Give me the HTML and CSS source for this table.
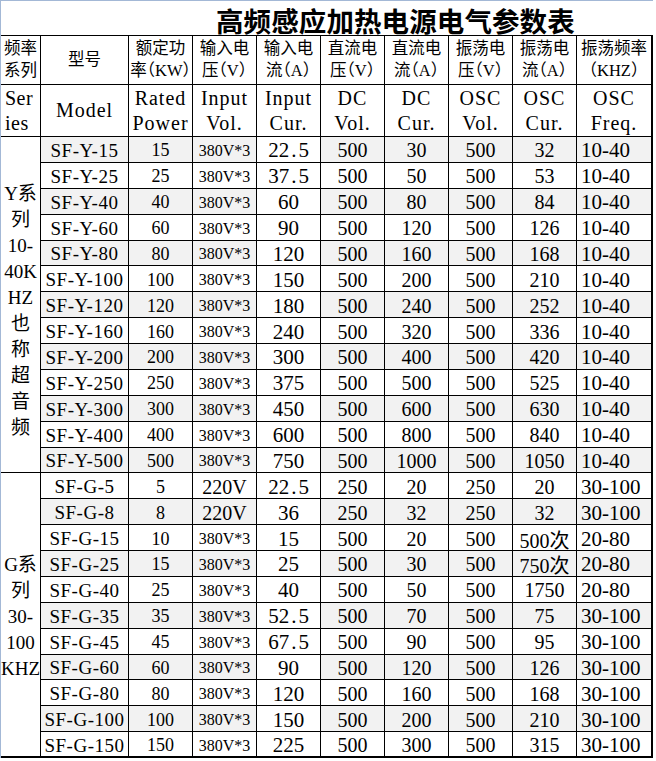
FILE: index.html
```html
<!DOCTYPE html>
<html lang="zh-CN">
<head>
<meta charset="utf-8">
<title>高频感应加热电源电气参数表</title>
<link rel="stylesheet" href="styles.css">
</head>
<body>
<div class="sheet">
  <div class="title">高频感应加热电源电气参数表</div>

  <div class="hrow1">
    <div>频率<br>系列</div>
    <div>型号</div>
    <div>额定功<br>率（KW）</div>
    <div>输入电<br>压（V）</div>
    <div>输入电<br>流（A）</div>
    <div>直流电<br>压（V）</div>
    <div>直流电<br>流（A）</div>
    <div>振荡电<br>压（V）</div>
    <div>振荡电<br>流（A）</div>
    <div>振荡频率<br>（KHZ）</div>
  </div>

  <div class="hrow2">
    <div class="ser">Ser<br>ies</div>
    <div>Model</div>
    <div>Rated<br>Power</div>
    <div>Input<br>Vol.</div>
    <div>Input<br>Cur.</div>
    <div>DC<br>Vol.</div>
    <div>DC<br>Cur.</div>
    <div>OSC<br>Vol.</div>
    <div>OSC<br>Cur.</div>
    <div>OSC<br>Freq.</div>
  </div>

  <div class="series y">Y系<br>列<br>10-<br>40K<br>HZ<br>也<br>称<br>超<br>音<br>频</div>
  <div class="row alt"><div>SF-Y-15</div><div>15</div><div>380V*3</div><div>22<span class="pt">.</span>5</div><div>500</div><div>30</div><div>500</div><div>32</div><div>10-40</div></div>
  <div class="row"><div>SF-Y-25</div><div>25</div><div>380V*3</div><div>37<span class="pt">.</span>5</div><div>500</div><div>50</div><div>500</div><div>53</div><div>10-40</div></div>
  <div class="row alt"><div>SF-Y-40</div><div>40</div><div>380V*3</div><div>60</div><div>500</div><div>80</div><div>500</div><div>84</div><div>10-40</div></div>
  <div class="row"><div>SF-Y-60</div><div>60</div><div>380V*3</div><div>90</div><div>500</div><div>120</div><div>500</div><div>126</div><div>10-40</div></div>
  <div class="row alt"><div>SF-Y-80</div><div>80</div><div>380V*3</div><div>120</div><div>500</div><div>160</div><div>500</div><div>168</div><div>10-40</div></div>
  <div class="row"><div>SF-Y-100</div><div>100</div><div>380V*3</div><div>150</div><div>500</div><div>200</div><div>500</div><div>210</div><div>10-40</div></div>
  <div class="row alt"><div>SF-Y-120</div><div>120</div><div>380V*3</div><div>180</div><div>500</div><div>240</div><div>500</div><div>252</div><div>10-40</div></div>
  <div class="row"><div>SF-Y-160</div><div>160</div><div>380V*3</div><div>240</div><div>500</div><div>320</div><div>500</div><div>336</div><div>10-40</div></div>
  <div class="row alt"><div>SF-Y-200</div><div>200</div><div>380V*3</div><div>300</div><div>500</div><div>400</div><div>500</div><div>420</div><div>10-40</div></div>
  <div class="row"><div>SF-Y-250</div><div>250</div><div>380V*3</div><div>375</div><div>500</div><div>500</div><div>500</div><div>525</div><div>10-40</div></div>
  <div class="row alt"><div>SF-Y-300</div><div>300</div><div>380V*3</div><div>450</div><div>500</div><div>600</div><div>500</div><div>630</div><div>10-40</div></div>
  <div class="row"><div>SF-Y-400</div><div>400</div><div>380V*3</div><div>600</div><div>500</div><div>800</div><div>500</div><div>840</div><div>10-40</div></div>
  <div class="row alt"><div>SF-Y-500</div><div>500</div><div>380V*3</div><div>750</div><div>500</div><div>1000</div><div>500</div><div>1050</div><div>10-40</div></div>

  <div class="series g">G系<br>列<br>30-<br>100<br>KHZ</div>
  <div class="row"><div>SF-G-5</div><div>5</div><div class="big">220V</div><div>22<span class="pt">.</span>5</div><div>250</div><div>20</div><div>250</div><div>20</div><div>30-100</div></div>
  <div class="row alt"><div>SF-G-8</div><div>8</div><div class="big">220V</div><div>36</div><div>250</div><div>32</div><div>250</div><div>32</div><div>30-100</div></div>
  <div class="row"><div>SF-G-15</div><div>10</div><div>380V*3</div><div>15</div><div>500</div><div>20</div><div>500</div><div>500次</div><div>20-80</div></div>
  <div class="row alt"><div>SF-G-25</div><div>15</div><div>380V*3</div><div>25</div><div>500</div><div>30</div><div>500</div><div>750次</div><div>20-80</div></div>
  <div class="row"><div>SF-G-40</div><div>25</div><div>380V*3</div><div>40</div><div>500</div><div>50</div><div>500</div><div>1750</div><div>20-80</div></div>
  <div class="row alt"><div>SF-G-35</div><div>35</div><div>380V*3</div><div>52<span class="pt">.</span>5</div><div>500</div><div>70</div><div>500</div><div>75</div><div>30-100</div></div>
  <div class="row"><div>SF-G-45</div><div>45</div><div>380V*3</div><div>67<span class="pt">.</span>5</div><div>500</div><div>90</div><div>500</div><div>95</div><div>30-100</div></div>
  <div class="row alt"><div>SF-G-60</div><div>60</div><div>380V*3</div><div>90</div><div>500</div><div>120</div><div>500</div><div>126</div><div>30-100</div></div>
  <div class="row"><div>SF-G-80</div><div>80</div><div>380V*3</div><div>120</div><div>500</div><div>160</div><div>500</div><div>168</div><div>30-100</div></div>
  <div class="row alt"><div>SF-G-100</div><div>100</div><div>380V*3</div><div>150</div><div>500</div><div>200</div><div>500</div><div>210</div><div>30-100</div></div>
  <div class="row last"><div>SF-G-150</div><div>150</div><div>380V*3</div><div>225</div><div>500</div><div>300</div><div>500</div><div>315</div><div>30-100</div></div>
</div>
</body>
</html>
```

FILE: styles.css
```css
html, body {
  margin: 0;
  padding: 0;
  background: #ffffff;
}

.sheet {
  display: grid;
  width: 652px;
  grid-template-columns: 40px 88px repeat(7, 64px) 76px;
  grid-template-rows: 35px 49px 52px repeat(24, 25.875px);
  border-top: 1px solid #a3b8d6;
  border-left: 1px solid #a3b8d6;
  font-family: "Liberation Serif", "Noto Sans CJK SC", serif;
  color: #000;
}

.hrow1, .hrow2, .row {
  display: contents;
}

.title,
.hrow1 > div,
.hrow2 > div,
.series,
.row > div {
  box-sizing: border-box;
  border-right: 1px solid #000;
  border-bottom: 1px solid #000;
  display: flex;
  align-items: center;
  justify-content: center;
  text-align: center;
  white-space: nowrap;
}

/* title */
.title {
  grid-column: 1 / -1;
  border-right: none;
  justify-content: flex-start;
  padding-left: 215px;
  padding-top: 4px;
  font-family: "Noto Sans CJK SC", sans-serif;
  font-weight: 700;
  font-size: 27.5px;
  line-height: 30px;
  letter-spacing: 0.1px;
}

/* header row 1 */
.hrow1 > div {
  font-family: "Liberation Serif", "Noto Sans CJK SC", serif;
  font-size: 16.5px;
  line-height: 22px;
  font-feature-settings: "halt";
}
.hrow1 > div:last-child,
.hrow2 > div:last-child,
.row > div:last-child {
  border-right: 2px solid #000;
}

/* header row 2 */
.hrow2 > div {
  font-size: 20px;
  line-height: 25px;
  letter-spacing: 1px;
}
.hrow2 > .ser {
  justify-content: flex-start;
  text-align: left;
  padding-left: 4px;
  letter-spacing: 0.5px;
}

/* series column */
.series {
  grid-column: 1;
  font-size: 19px;
  line-height: 26px;
}
.series.y {
  grid-row: span 13;
  padding-top: 12px;
}
.series.g {
  grid-row: span 11;
  border-bottom: 2px solid #000;
  padding-top: 4px;
}

/* data cells */
.row > div {
  font-size: 20px;
  padding-top: 3px;
}
.row > div:nth-child(1) {
  font-size: 19px;
  letter-spacing: 0.5px;
}
.row > div:nth-child(2) {
  font-size: 18px;
}
.row > div:nth-child(3) {
  font-size: 16px;
}
.row > div:nth-child(3).big {
  font-size: 20px;
}
.row > div:nth-child(4) {
  font-size: 21px;
}
.row > div:nth-child(9) {
  justify-content: flex-start;
  padding-left: 4px;
  font-size: 21px;
}
.pt {
  margin: 0 2px;
}

.row.alt > div {
  background: #f2f2f2;
}
.row.alt > div:nth-child(4) {
  background: #ffffff;
}

.row.last > div {
  border-bottom: 2px solid #000;
}
```
